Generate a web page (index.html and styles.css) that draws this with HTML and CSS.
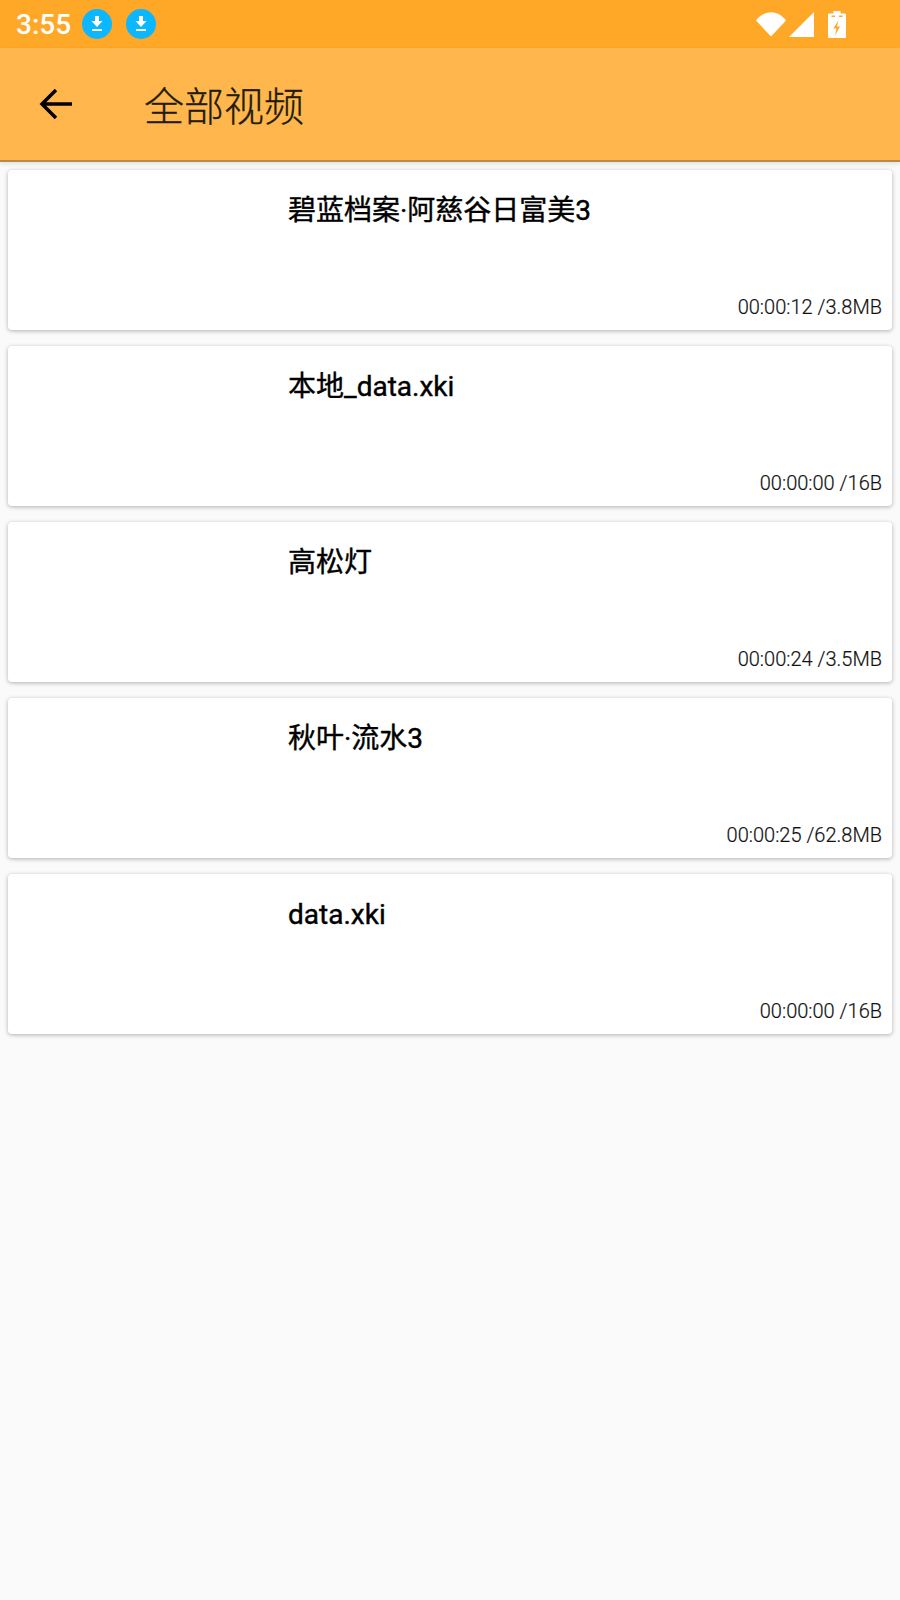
FILE: index.html
```html
<!DOCTYPE html>
<html lang="zh-CN">
<head>
    <meta charset="UTF-8">
    <title>全部视频</title>
    <link rel="stylesheet" href="styles.css">
</head>
<body>
    <div class="status-bar">
        <span class="clock">3:55</span>
        <span class="dl-badge">
            <svg viewBox="0 0 30 30" width="30" height="30"><path d="M13 7h4v5h3.500L15 18l-5.500-6H13z" fill="#fff"/><rect x="10" y="20" width="10" height="2" fill="#fff"/></svg>
        </span>
        <span class="dl-badge second">
            <svg viewBox="0 0 30 30" width="30" height="30"><path d="M13 7h4v5h3.500L15 18l-5.500-6H13z" fill="#fff"/><rect x="10" y="20" width="10" height="2" fill="#fff"/></svg>
        </span>
        <div class="status-icons">
            <svg class="wifi" viewBox="0 0 30 26" width="30" height="26"><path d="M0 9.500C8-1.500 22-1.500 30 9.500L15 25.500z" fill="#fff"/></svg>
            <svg class="signal" viewBox="0 0 25 25" width="25" height="25"><path d="M25 0v25H0z" fill="#fff"/></svg>
            <svg class="battery" viewBox="0 0 18 27" width="18" height="27"><path fill-rule="evenodd" fill="#fff" d="M5.500 0h7v2.500H17a1 1 0 0 1 1 1V26a1 1 0 0 1-1 1H1a1 1 0 0 1-1-1V3.500a1 1 0 0 1 1-1h4.500zM3.500 4.500v1.500h3.500V4.500zM11 4.500v1.500h3.500V4.500zM10.500 9L5.500 17.500h3L7 24.500l5-9h-3z"/></svg>
        </div>
    </div>

    <div class="toolbar">
        <svg class="back" viewBox="0 0 34 32" width="34" height="32"><path d="M33 16H4M17 2L3 16l14 14" fill="none" stroke="#000" stroke-width="3.500"/></svg>
        <span class="toolbar-title">全部视频</span>
    </div>

    <div class="list">
        <div class="card">
            <div class="card-title">碧蓝档案·阿慈谷日富美3</div>
            <div class="card-meta">00:00:12 /3.8MB</div>
        </div>
        <div class="card">
            <div class="card-title">本地_data.xki</div>
            <div class="card-meta">00:00:00 /16B</div>
        </div>
        <div class="card">
            <div class="card-title">高松灯</div>
            <div class="card-meta">00:00:24 /3.5MB</div>
        </div>
        <div class="card">
            <div class="card-title">秋叶·流水3</div>
            <div class="card-meta">00:00:25 /62.8MB</div>
        </div>
        <div class="card">
            <div class="card-title">data.xki</div>
            <div class="card-meta">00:00:00 /16B</div>
        </div>
    </div>
</body>
</html>
```

FILE: styles.css
```css
body {
    margin: 0;
    height: 1600px;
    overflow: hidden;
    background-color: #fafafa;
    font-family: Roboto, "Noto Sans CJK SC", sans-serif;
}

.status-bar {
    height: 48px;
    background-color: #ffa726;
    display: flex;
    align-items: center;
    padding-left: 16px;
    color: #fff;
}

.clock {
    font-size: 28px;
    font-weight: 500;
    width: 66px;
}

.dl-badge {
    width: 30px;
    height: 30px;
    border-radius: 50%;
    background-color: #0bb7ff;
    display: block;
}

.dl-badge.second {
    margin-left: 14px;
}

.status-icons {
    margin-left: auto;
    margin-right: 54px;
    display: flex;
    align-items: center;
}

.signal {
    margin-left: 3px;
}

.battery {
    margin-left: 14px;
}

.toolbar {
    height: 114px;
    box-sizing: border-box;
    background-color: #ffb74d;
    border-bottom: 2px solid #b98a45;
    box-shadow: 0 2px 4px rgba(0, 0, 0, 0.1);
    display: flex;
    align-items: center;
    padding-left: 39px;
}

.toolbar-title {
    font-size: 40px;
    font-weight: 300;
    margin-left: 71px;
    color: #221a0c;
    font-family: "Noto Sans CJK SC", sans-serif;
    -webkit-text-stroke: 0.3px #221a0c;
}

.list {
    padding: 8px 8px 0;
    display: flex;
    flex-direction: column;
    gap: 16px;
}

.card {
    height: 160px;
    box-sizing: border-box;
    background-color: #fff;
    border-radius: 4px;
    box-shadow: 0 1px 4px rgba(0, 0, 0, 0.3);
    padding: 22px 10px 10px 280px;
    display: flex;
    flex-direction: column;
    justify-content: space-between;
}

.card-title {
    font-size: 28px;
    line-height: 38px;
    color: #000;
    -webkit-text-stroke: 0.4px #000;
}

.card-meta {
    font-size: 20px;
    font-weight: 300;
    line-height: 26px;
    color: #111;
    text-align: right;
    -webkit-text-stroke: 0.2px #111;
}
```
